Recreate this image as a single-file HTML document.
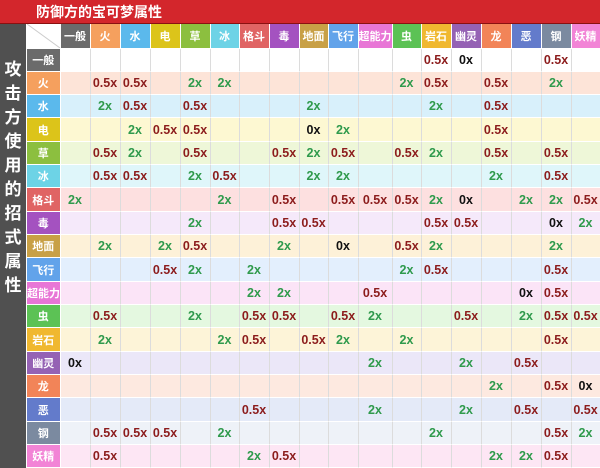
<!DOCTYPE html>
<html><head><meta charset="utf-8"><style>
*{margin:0;padding:0;box-sizing:border-box}
body{width:600px;height:468px;overflow:hidden;background:#fff;font-family:"Liberation Sans","Noto Sans CJK SC",sans-serif;position:relative}
#title{position:absolute;left:0;top:0;width:600px;height:24px;background:#d3262c;color:#fff;font-weight:bold;font-size:14px;line-height:24px;padding-left:36px;border-bottom:1px solid #8a1010}
#side{position:absolute;left:0;top:24px;width:26px;height:444px;background:#505050;color:#fff;font-size:17px;font-weight:bold;text-align:center;line-height:24px;padding-top:34px}
table{position:absolute;left:27px;top:24px;border-collapse:collapse;table-layout:fixed;width:573px}
td{height:23.33px;border-right:1px solid #dcdcdc;border-bottom:1px solid rgba(255,255,255,.6);text-align:center;font-size:12.5px;font-weight:bold;padding:0;overflow:hidden;white-space:nowrap}
tr.h td{height:24px;color:#fff;font-size:11px;font-weight:bold;border-right:1px solid #fff}
td.rh{color:#fff;font-size:11px;border-right:1px solid #fff}
.r{color:#8c1c1c}.g{color:#2f9a4c}.k{color:#111}
.c{background:#fff;position:relative}
</style></head><body>
<div id="title">防御方的宝可梦属性</div>
<div id="side">攻<br>击<br>方<br>使<br>用<br>的<br>招<br>式<br>属<br>性</div>
<table>
<colgroup><col style="width:33px"><col style="width:30px"><col style="width:30px"><col style="width:30px"><col style="width:30px"><col style="width:30px"><col style="width:29px"><col style="width:30px"><col style="width:30px"><col style="width:29px"><col style="width:30px"><col style="width:34px"><col style="width:29px"><col style="width:30px"><col style="width:30px"><col style="width:30px"><col style="width:30px"><col style="width:30px"><col style="width:29px"></colgroup>
<tr class="h"><td class="c"><svg width="33" height="24" style="position:absolute;left:0;top:0"><line x1="0" y1="0" x2="33" y2="24" stroke="#ccc"/></svg></td><td style="background:#6b6b6b">一般</td><td style="background:#f5a05e">火</td><td style="background:#5bb9ec">水</td><td style="background:#dcc41a">电</td><td style="background:#8cbf3f">草</td><td style="background:#6dd3e6">冰</td><td style="background:#e06464">格斗</td><td style="background:#a452c0">毒</td><td style="background:#c8a046">地面</td><td style="background:#62a3ea">飞行</td><td style="background:#e876d6">超能力</td><td style="background:#5cc255">虫</td><td style="background:#f0b830">岩石</td><td style="background:#9562b4">幽灵</td><td style="background:#f28458">龙</td><td style="background:#637bcb">恶</td><td style="background:#7b8aa0">钢</td><td style="background:#f284d6">妖精</td></tr>
<tr style="background:#fff"><td class="rh" style="background:#6b6b6b">一般</td><td></td><td></td><td></td><td></td><td></td><td></td><td></td><td></td><td></td><td></td><td></td><td></td><td class="r">0.5x</td><td class="k">0x</td><td></td><td></td><td class="r">0.5x</td><td></td></tr>
<tr style="background:#fde4d8"><td class="rh" style="background:#f5a05e">火</td><td></td><td class="r">0.5x</td><td class="r">0.5x</td><td></td><td class="g">2x</td><td class="g">2x</td><td></td><td></td><td></td><td></td><td></td><td class="g">2x</td><td class="r">0.5x</td><td></td><td class="r">0.5x</td><td></td><td class="g">2x</td><td></td></tr>
<tr style="background:#d8f0fb"><td class="rh" style="background:#5bb9ec">水</td><td></td><td class="g">2x</td><td class="r">0.5x</td><td></td><td class="r">0.5x</td><td></td><td></td><td></td><td class="g">2x</td><td></td><td></td><td></td><td class="g">2x</td><td></td><td class="r">0.5x</td><td></td><td></td><td></td></tr>
<tr style="background:#fdf8d2"><td class="rh" style="background:#dcc41a">电</td><td></td><td></td><td class="g">2x</td><td class="r">0.5x</td><td class="r">0.5x</td><td></td><td></td><td></td><td class="k">0x</td><td class="g">2x</td><td></td><td></td><td></td><td></td><td class="r">0.5x</td><td></td><td></td><td></td></tr>
<tr style="background:#eef7d8"><td class="rh" style="background:#8cbf3f">草</td><td></td><td class="r">0.5x</td><td class="g">2x</td><td></td><td class="r">0.5x</td><td></td><td></td><td class="r">0.5x</td><td class="g">2x</td><td class="r">0.5x</td><td></td><td class="r">0.5x</td><td class="g">2x</td><td></td><td class="r">0.5x</td><td></td><td class="r">0.5x</td><td></td></tr>
<tr style="background:#dff6fa"><td class="rh" style="background:#6dd3e6">冰</td><td></td><td class="r">0.5x</td><td class="r">0.5x</td><td></td><td class="g">2x</td><td class="r">0.5x</td><td></td><td></td><td class="g">2x</td><td class="g">2x</td><td></td><td></td><td></td><td></td><td class="g">2x</td><td></td><td class="r">0.5x</td><td></td></tr>
<tr style="background:#fde0e0"><td class="rh" style="background:#e06464">格斗</td><td class="g">2x</td><td></td><td></td><td></td><td></td><td class="g">2x</td><td></td><td class="r">0.5x</td><td></td><td class="r">0.5x</td><td class="r">0.5x</td><td class="r">0.5x</td><td class="g">2x</td><td class="k">0x</td><td></td><td class="g">2x</td><td class="g">2x</td><td class="r">0.5x</td></tr>
<tr style="background:#f5e9fa"><td class="rh" style="background:#a452c0">毒</td><td></td><td></td><td></td><td></td><td class="g">2x</td><td></td><td></td><td class="r">0.5x</td><td class="r">0.5x</td><td></td><td></td><td></td><td class="r">0.5x</td><td class="r">0.5x</td><td></td><td></td><td class="k">0x</td><td class="g">2x</td></tr>
<tr style="background:#fdf1d8"><td class="rh" style="background:#c8a046">地面</td><td></td><td class="g">2x</td><td></td><td class="g">2x</td><td class="r">0.5x</td><td></td><td></td><td class="g">2x</td><td></td><td class="k">0x</td><td></td><td class="r">0.5x</td><td class="g">2x</td><td></td><td></td><td></td><td class="g">2x</td><td></td></tr>
<tr style="background:#e3effd"><td class="rh" style="background:#62a3ea">飞行</td><td></td><td></td><td></td><td class="r">0.5x</td><td class="g">2x</td><td></td><td class="g">2x</td><td></td><td></td><td></td><td></td><td class="g">2x</td><td class="r">0.5x</td><td></td><td></td><td></td><td class="r">0.5x</td><td></td></tr>
<tr style="background:#fbe4f7"><td class="rh" style="background:#e876d6">超能力</td><td></td><td></td><td></td><td></td><td></td><td></td><td class="g">2x</td><td class="g">2x</td><td></td><td></td><td class="r">0.5x</td><td></td><td></td><td></td><td></td><td class="k">0x</td><td class="r">0.5x</td><td></td></tr>
<tr style="background:#e4f8e0"><td class="rh" style="background:#5cc255">虫</td><td></td><td class="r">0.5x</td><td></td><td></td><td class="g">2x</td><td></td><td class="r">0.5x</td><td class="r">0.5x</td><td></td><td class="r">0.5x</td><td class="g">2x</td><td></td><td></td><td class="r">0.5x</td><td></td><td class="g">2x</td><td class="r">0.5x</td><td class="r">0.5x</td></tr>
<tr style="background:#fdf4d8"><td class="rh" style="background:#f0b830">岩石</td><td></td><td class="g">2x</td><td></td><td></td><td></td><td class="g">2x</td><td class="r">0.5x</td><td></td><td class="r">0.5x</td><td class="g">2x</td><td></td><td class="g">2x</td><td></td><td></td><td></td><td></td><td class="r">0.5x</td><td></td></tr>
<tr style="background:#ebe7f8"><td class="rh" style="background:#9562b4">幽灵</td><td class="k">0x</td><td></td><td></td><td></td><td></td><td></td><td></td><td></td><td></td><td></td><td class="g">2x</td><td></td><td></td><td class="g">2x</td><td></td><td class="r">0.5x</td><td></td><td></td></tr>
<tr style="background:#fde9e0"><td class="rh" style="background:#f28458">龙</td><td></td><td></td><td></td><td></td><td></td><td></td><td></td><td></td><td></td><td></td><td></td><td></td><td></td><td></td><td class="g">2x</td><td></td><td class="r">0.5x</td><td class="k">0x</td></tr>
<tr style="background:#e4eaf8"><td class="rh" style="background:#637bcb">恶</td><td></td><td></td><td></td><td></td><td></td><td></td><td class="r">0.5x</td><td></td><td></td><td></td><td class="g">2x</td><td></td><td></td><td class="g">2x</td><td></td><td class="r">0.5x</td><td></td><td class="r">0.5x</td></tr>
<tr style="background:#eef2f8"><td class="rh" style="background:#7b8aa0">钢</td><td></td><td class="r">0.5x</td><td class="r">0.5x</td><td class="r">0.5x</td><td></td><td class="g">2x</td><td></td><td></td><td></td><td></td><td></td><td></td><td class="g">2x</td><td></td><td></td><td></td><td class="r">0.5x</td><td class="g">2x</td></tr>
<tr style="background:#fde6f4"><td class="rh" style="background:#f284d6">妖精</td><td></td><td class="r">0.5x</td><td></td><td></td><td></td><td></td><td class="g">2x</td><td class="r">0.5x</td><td></td><td></td><td></td><td></td><td></td><td></td><td class="g">2x</td><td class="g">2x</td><td class="r">0.5x</td><td></td></tr>
</table>
</body></html>
